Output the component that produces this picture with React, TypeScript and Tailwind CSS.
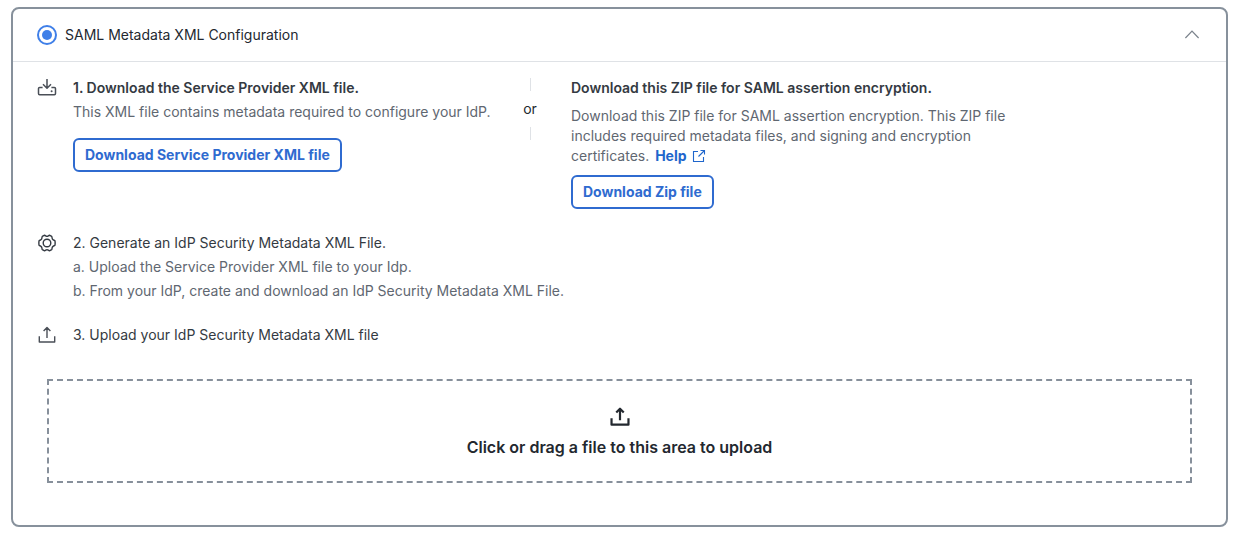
import type { ReactNode } from "react";

function DownloadIcon() {
  return (
    <svg viewBox="0 0 20 20" className="size-5 shrink-0" fill="none" stroke="#4a4f57" strokeWidth="1.5" strokeLinejoin="round" aria-hidden="true">
      <path d="M10 1v8.6M6 6.2l4 4 4-4M5.6 9.5H2.6q-1.1 0-1.1 1.1v5q0 1.1 1.1 1.1h14.8q1.1 0 1.1-1.1v-5q0-1.1-1.1-1.1h-3" />
      <circle cx="14.6" cy="13.3" r="1" fill="#4a4f57" stroke="none" />
    </svg>
  );
}

function GearIcon() {
  return (
    <svg viewBox="0 0 20 20" className="size-5 shrink-0" fill="none" stroke="#343a42" strokeWidth="1.4" strokeLinejoin="round" aria-hidden="true">
      <path d="M7.2 2.3Q8 2.2 8.6 2.8Q10 3.6 11.4 2.8Q12 2.2 12.8 2.3L14.7 3.4Q15.2 3.9 15 4.8Q15.1 6.3 16.5 7Q17.6 7.2 18 7.9Q18.3 10 18 12.1Q17.6 12.8 16.5 13Q15.1 13.7 15 15.2Q15.2 16.1 14.7 16.6L12.8 17.7Q12 17.8 11.4 17.2Q10 16.4 8.6 17.2Q8 17.8 7.2 17.7L5.3 16.6Q4.8 16.1 5 15.2Q4.9 13.7 3.5 13Q2.4 12.8 2 12.1Q1.7 10 2 7.9Q2.4 7.2 3.5 7Q4.9 6.3 5 4.8Q4.8 3.9 5.3 3.4Z" />
      <circle cx="10" cy="10" r="3.8" />
    </svg>
  );
}

function UploadIcon({ className, weight }: { className: string; weight: number }) {
  return (
    <svg viewBox="0 0 20 20" className={className} fill="none" stroke="currentColor" strokeWidth={weight} strokeLinejoin="round" aria-hidden="true">
      <path d="M10 13V2.8M6.6 6 10 2.5 13.4 6M2.3 11.2V17H17.7V11.2" />
    </svg>
  );
}

function ExternalIcon() {
  return (
    <svg viewBox="0 0 14 14" className="size-[14px]" fill="none" stroke="currentColor" strokeWidth="1.1" aria-hidden="true">
      <path d="M6 2.5H1.5v10h10V8M8.5 1.5h4v4M12.5 1.5 6.5 7.5" />
    </svg>
  );
}

function OutlineButton({ children }: { children: ReactNode }) {
  return (
    <button type="button" className="h-[34px] rounded-md border-2 border-[#2f6bd0] px-[10px] text-sm font-bold text-[#2f6bd0]">
      {children}
    </button>
  );
}

export default function App() {
  return (
    <main className="pt-[7px] pr-[13px] pl-[11px] font-['Inter',sans-serif] text-sm text-[#23282f]">
      <section className="rounded-lg border-2 border-[#87919c] bg-white">
        <header className="flex h-[53px] items-center justify-between border-b border-[#dfe2e6] px-6">
          <label className="flex items-center gap-2">
            <input
              type="radio"
              name="configuration"
              defaultChecked
              className="size-5 appearance-none rounded-full border-2 border-[#3f7fe8] bg-clip-content p-[3px] checked:bg-[#3f7fe8]"
            />
            SAML Metadata XML Configuration
          </label>
          <button type="button" aria-label="Collapse" className="flex size-5 items-center justify-center">
            <svg viewBox="0 0 20 20" className="size-5" fill="none" stroke="#7b838c" strokeWidth="1.2" aria-hidden="true">
              <path d="M3.4 13 10 6.2l6.6 6.8" />
            </svg>
          </button>
        </header>

        <div className="px-6 pt-[14px] pb-[42px]">
          <div className="flex gap-4">
            <div className="flex h-6 items-center"><DownloadIcon /></div>
            <div className="flex min-w-0 flex-1">
              <div className="w-[440px]">
                <h2 className="font-semibold leading-6 text-[#343a42]">1. Download the Service Provider XML file.</h2>
                <p className="mb-[14px] leading-6 text-[#5f6771]">This XML file contains metadata required to configure your IdP.</p>
                <OutlineButton>Download Service Provider XML file</OutlineButton>
              </div>
              <div className="flex w-[34px] flex-col items-center pt-[2px]">
                <span className="h-[13px] w-px bg-[#dfe2e6]" />
                <span className="py-2 leading-5">or</span>
                <span className="h-[13px] w-px bg-[#dfe2e6]" />
              </div>
              <div className="ml-6 max-w-[450px] flex-1">
                <h2 className="font-semibold leading-6 text-[#343a42]">Download this ZIP file for SAML assertion encryption.</h2>
                <p className="mt-[6px] mb-[9px] leading-5 text-[#5f6771]">
                  Download this ZIP file for SAML assertion encryption. This ZIP file includes required metadata files, and signing and encryption certificates.{" "}
                  <a href="#help" className="ml-[2px] inline-flex items-center gap-[5px] font-bold text-[#1f66cc]">
                    Help
                    <ExternalIcon />
                  </a>
                </p>
                <OutlineButton>Download Zip file</OutlineButton>
              </div>
            </div>
          </div>

          <div className="mt-[22px] flex gap-4">
            <div className="flex h-6 items-center"><GearIcon /></div>
            <div className="leading-6 text-[#5f6771]">
              <h2 className="text-[#343a42]">2. Generate an IdP Security Metadata XML File.</h2>
              <p>a. Upload the Service Provider XML file to your Idp.</p>
              <p>b. From your IdP, create and download an IdP Security Metadata XML File.</p>
            </div>
          </div>

          <div className="mt-5 flex gap-4">
            <div className="flex h-6 items-center text-[#4a4f57]"><UploadIcon className="size-5 shrink-0" weight={1.4} /></div>
            <h2 className="leading-6 text-[#343a42]">3. Upload your IdP Security Metadata XML file</h2>
          </div>

          <label className="relative mx-[10px] mt-8 flex h-[104px] cursor-pointer flex-col items-center justify-end gap-[7px] border-2 border-dashed border-[#87909b] pb-[22px] text-base font-semibold text-[#23282f]">
            <input type="file" className="sr-only" />
            <UploadIcon className="size-[22px]" weight={2} />
            Click or drag a file to this area to upload
          </label>
        </div>
      </section>
    </main>
  );
}
